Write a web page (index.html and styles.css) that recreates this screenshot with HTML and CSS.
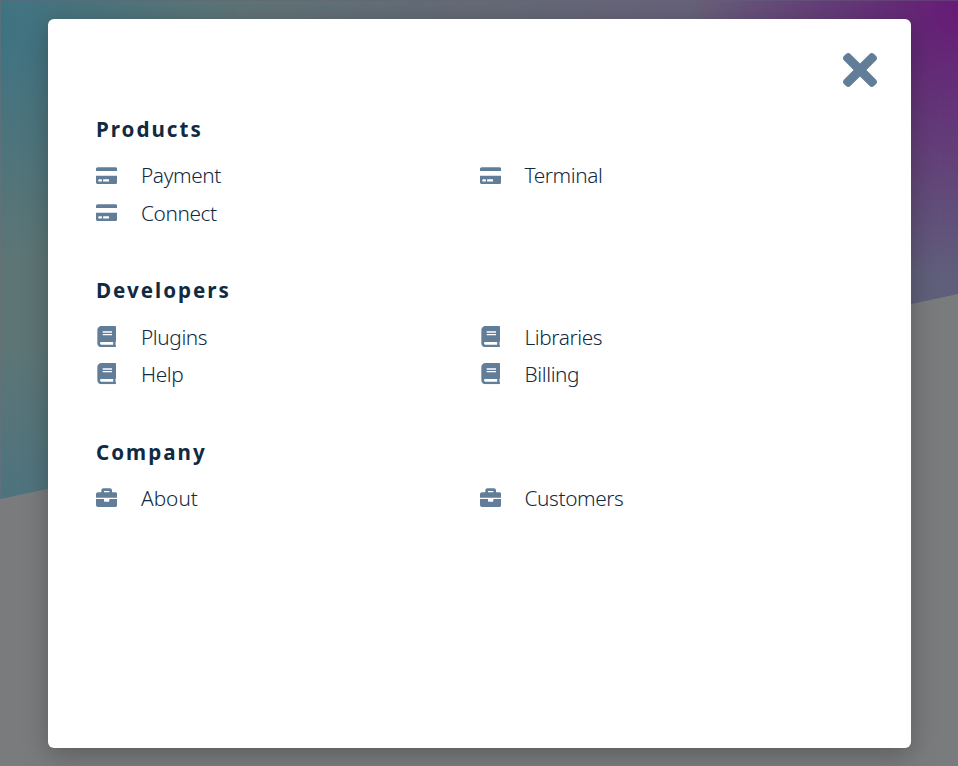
FILE: index.html
```
<!DOCTYPE html>
<html lang="en">
<head>
<meta charset="utf-8">
<title>Menu</title>
<link rel="stylesheet" href="styles.css">
</head>
<body>
<svg width="0" height="0" class="sprite" aria-hidden="true">
  <symbol id="card" viewBox="0 0 576 512"><path d="M0 432c0 26.5 21.5 48 48 48h480c26.5 0 48-21.5 48-48V256H0v176zm192-68c0-6.6 5.4-12 12-12h136c6.6 0 12 5.4 12 12v40c0 6.6-5.4 12-12 12H204c-6.6 0-12-5.4-12-12v-40zm-128 0c0-6.6 5.4-12 12-12h72c6.6 0 12 5.4 12 12v40c0 6.6-5.4 12-12 12H76c-6.6 0-12-5.4-12-12v-40zM576 80v48H0V80c0-26.5 21.5-48 48-48h480c26.5 0 48 21.5 48 48z"/></symbol>
  <symbol id="book" viewBox="0 0 448 512"><path d="M448 360V24c0-13.3-10.7-24-24-24H96C43 0 0 43 0 96v320c0 53 43 96 96 96h328c13.3 0 24-10.7 24-24v-16c0-7.5-3.5-14.3-8.9-18.7-4.2-15.4-4.2-59.3 0-74.7 5.4-4.3 8.9-11.1 8.9-18.6zM128 134c0-3.3 2.7-6 6-6h212c3.3 0 6 2.7 6 6v20c0 3.3-2.7 6-6 6H134c-3.3 0-6-2.7-6-6v-20zm0 64c0-3.3 2.7-6 6-6h212c3.3 0 6 2.7 6 6v20c0 3.3-2.7 6-6 6H134c-3.3 0-6-2.7-6-6v-20zm253.4 250H96c-17.7 0-32-14.3-32-32 0-17.6 14.4-32 32-32h285.4c-1.9 17.1-1.9 46.9 0 64z"/></symbol>
  <symbol id="briefcase" viewBox="0 0 512 512"><path d="M320 336c0 8.84-7.16 16-16 16h-96c-8.84 0-16-7.16-16-16v-48H0v144c0 25.6 22.4 48 48 48h416c25.6 0 48-22.4 48-48V288H320v48zm144-208h-80V80c0-25.6-22.4-48-48-48H176c-25.6 0-48 22.4-48 48v48H48c-25.6 0-48 22.4-48 48v80h512v-80c0-25.6-22.4-48-48-48zm-144 0H192V96h128v32z"/></symbol>
</svg>
<div class="hero"></div>
<aside class="sidebar">
  <button class="close" aria-label="Close">
    <svg viewBox="0 80 352 352"><path d="M242.72 256l100.07-100.07c12.28-12.28 12.28-32.19 0-44.48l-22.24-22.24c-12.28-12.28-32.19-12.28-44.48 0L176 189.28 75.93 89.21c-12.28-12.28-32.19-12.28-44.48 0L9.21 111.45c-12.28 12.28-12.28 32.19 0 44.48L109.28 256 9.21 356.07c-12.28 12.28-12.28 32.19 0 44.48l22.24 22.24c12.28 12.28 32.2 12.28 44.48 0L176 322.72l100.07 100.07c12.28 12.28 32.2 12.28 44.48 0l22.24-22.24c12.28-12.28 12.28-32.19 0-44.48L242.72 256z"/></svg>
  </button>
  <nav class="groups">
    <section>
      <h4>Products</h4>
      <div class="links">
        <a><svg><use href="#card"/></svg><span>Payment</span></a>
        <a><svg><use href="#card"/></svg><span>Terminal</span></a>
        <a><svg><use href="#card"/></svg><span>Connect</span></a>
      </div>
    </section>
    <section>
      <h4>Developers</h4>
      <div class="links">
        <a><svg><use href="#book"/></svg><span>Plugins</span></a>
        <a><svg><use href="#book"/></svg><span>Libraries</span></a>
        <a><svg><use href="#book"/></svg><span>Help</span></a>
        <a><svg><use href="#book"/></svg><span>Billing</span></a>
      </div>
    </section>
    <section>
      <h4>Company</h4>
      <div class="links">
        <a><svg><use href="#briefcase"/></svg><span class="loose">About</span></a>
        <a><svg><use href="#briefcase"/></svg><span>Customers</span></a>
      </div>
    </section>
  </nav>
</aside>
</body>
</html>
```
FILE: styles.css
```
* { box-sizing: border-box; }
body {
  margin: 0;
  height: 766px;
  padding: 19px 47px 18px 48px;
  overflow: hidden;
  background: #7a7b7d;
  font-family: "Segoe UI", "Noto Sans", sans-serif;
}
.sprite { position: absolute; }
.hero {
  position: absolute;
  inset: 0;
  clip-path: polygon(0 0, 100% 0, 100% 294px, 0 499px);
  background:
    linear-gradient(rgba(110, 110, 120, .5), rgba(110, 110, 120, .5)) 0 0 / 1px 100% no-repeat,
    linear-gradient(rgba(100, 100, 120, .4), rgba(100, 100, 120, .4)) 0 0 / 100% 1px no-repeat,
    radial-gradient(circle at 958px 10px, #661b76 0, rgba(102, 27, 118, 0) 270px),
    radial-gradient(circle at 0 30px, #3e7382 0, rgba(62, 115, 130, 0) 240px),
    radial-gradient(circle at 0 520px, #4b7380 0, rgba(75, 115, 128, 0) 190px),
    linear-gradient(90deg, #5e7575 0, #5e7576 20%, #656a76 50%, #67617a 75%, #5f5f7b 100%);
}
.sidebar {
  position: relative;
  height: 729px;
  padding: 34px 34px 0 48px;
  display: flex;
  flex-direction: column;
  background: #fff;
  border-radius: 6px;
  box-shadow: 0 6px 26px rgba(0, 0, 0, .26);
}
.close {
  align-self: flex-end;
  width: 34px;
  height: 34px;
  padding: 0;
  border: 0;
  background: none;
}
.close svg { display: block; width: 34px; height: 34px; }
svg { fill: #617d98; }
.groups { margin: 26px 14px 0 0; }
section { height: 161.3px; }
h4 {
  margin: 0 0 11.7px;
  font-size: 20.6px;
  line-height: 32px;
  font-weight: 700;
  letter-spacing: 2px;
  color: #102a42;
}
.links {
  display: grid;
  grid-template-columns: 1fr 1fr;
  grid-auto-rows: 37.3px;
}
a {
  display: grid;
  grid-template-columns: 21.33px auto;
  column-gap: 23.7px;
  align-items: center;
  justify-content: start;
  font-size: 20.8px;
  line-height: 32px;
  font-weight: 300;
  letter-spacing: -.39px;
  color: #102a42;
}
a svg { width: 21.33px; height: 21.33px; }
.loose { letter-spacing: 0; }
```
